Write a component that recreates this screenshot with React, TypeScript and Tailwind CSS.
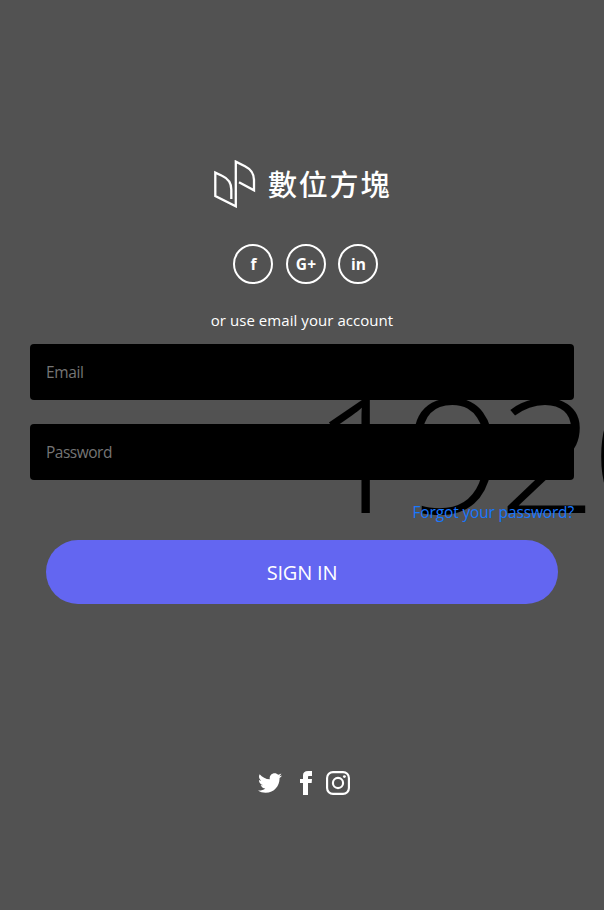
import React from "react";

const socials = [
  { label: "f", margin: "", tracking: "pl-px" },
  { label: "G+", margin: "ml-[13px]", tracking: "tracking-[0.2px]" },
  { label: "in", margin: "ml-3", tracking: "pl-px" },
];

function Logo() {
  return (
    <div className="ml-[214px] flex h-12 items-start">
      <svg width="42" height="48" viewBox="0 0 42 48" fill="none" stroke="white" strokeWidth="2.3">
        <path d="M17.3 39V29.5C17.3 22 14 18.5 8 15.8L1.3 12.6V36L21.8 46.3V1.6L31 6.2C37 9.2 40 13.5 40 20V30.3L25 22.2" />
      </svg>
      <div className="ml-3 whitespace-nowrap font-['Noto_Sans_CJK_TC',sans-serif] text-[29px] font-medium leading-[46px] tracking-[1.8px]">
        數位方塊
      </div>
    </div>
  );
}

function Field({ type, placeholder, tracking }: { type: string; placeholder: string; tracking: string }) {
  return (
    <input
      type={type}
      placeholder={placeholder}
      className={`block h-14 w-full rounded bg-black px-4 text-[15.5px] text-white outline-none placeholder:text-[#757575] ${tracking}`}
    />
  );
}

export default function App() {
  return (
    <div className="relative h-[910px] w-full overflow-hidden bg-[#525252] font-['Open_Sans',sans-serif] text-[16px] text-white">
      <div className="pointer-events-none absolute left-[312px] top-[343px] origin-left scale-x-110 whitespace-nowrap text-[158px] font-light leading-[218px] tracking-[-5.6px] text-black">
        1920
      </div>
      <main className="relative flex h-full flex-col pt-[160px]">
        <Logo />
        <div className="ml-[233px] mt-9 flex">
          {socials.map((s) => (
            <button
              key={s.label}
              className={`flex size-10 items-center justify-center rounded-full border-2 border-white pt-0.5 text-[15.5px] font-bold ${s.margin} ${s.tracking}`}
            >
              {s.label}
            </button>
          ))}
        </div>
        <p className="mt-6 text-center text-[15px] leading-6 tracking-[0.06px]">or use email your account</p>
        <form className="mt-3 flex flex-col px-[30px]">
          <Field type="email" placeholder="Email" tracking="tracking-[-0.35px]" />
          <div className="h-6" />
          <Field type="password" placeholder="Password" tracking="tracking-[-0.5px]" />
          <a href="#" className="mt-5 self-end text-[15.5px] leading-6 tracking-[-0.15px] text-[#1877ff]">
            Forgot your password?
          </a>
          <button type="button" className="mx-4 mt-4 h-16 rounded-full bg-[#6366f1] pt-0.5 text-[20px] tracking-[-0.2px]">
            SIGN IN
          </button>
        </form>
        <footer className="ml-[258px] mt-[167px] flex">
          <svg width="24" height="24" viewBox="0 0 24 24" fill="currentColor">
            <path d="M24 4.557c-.883.392-1.832.656-2.828.775 1.017-.609 1.798-1.574 2.165-2.724-.951.564-2.005.974-3.127 1.195-.897-.957-2.178-1.555-3.594-1.555-3.179 0-5.515 2.966-4.797 6.045-4.091-.205-7.719-2.165-10.148-5.144-1.29 2.213-.669 5.108 1.523 6.574-.806-.026-1.566-.247-2.229-.616-.054 2.281 1.581 4.415 3.949 4.89-.693.188-1.452.232-2.224.084.626 1.956 2.444 3.379 4.6 3.419-2.07 1.623-4.678 2.348-7.29 2.04 2.179 1.397 4.768 2.212 7.548 2.212 9.142 0 14.307-7.721 13.995-14.646.962-.695 1.797-1.562 2.457-2.549z" />
          </svg>
          <svg className="ml-3" width="24" height="24" viewBox="0 0 24 24" fill="currentColor">
            <path d="M9 8h-3v4h3v12h5v-12h3.642l.358-4h-4v-1.667c0-.955.192-1.333 1.115-1.333h2.885v-5h-3.808c-3.596 0-5.192 1.583-5.192 4.615v3.385z" />
          </svg>
          <svg className="ml-2" width="24" height="24" viewBox="0 0 24 24">
            <rect x="1.08" y="1.08" width="21.84" height="21.84" rx="5.9" fill="none" stroke="currentColor" strokeWidth="2.16" />
            <circle cx="12" cy="12" r="5.08" fill="none" stroke="currentColor" strokeWidth="2.16" />
            <circle cx="18.4" cy="5.6" r="1.44" fill="currentColor" />
          </svg>
        </footer>
      </main>
    </div>
  );
}
